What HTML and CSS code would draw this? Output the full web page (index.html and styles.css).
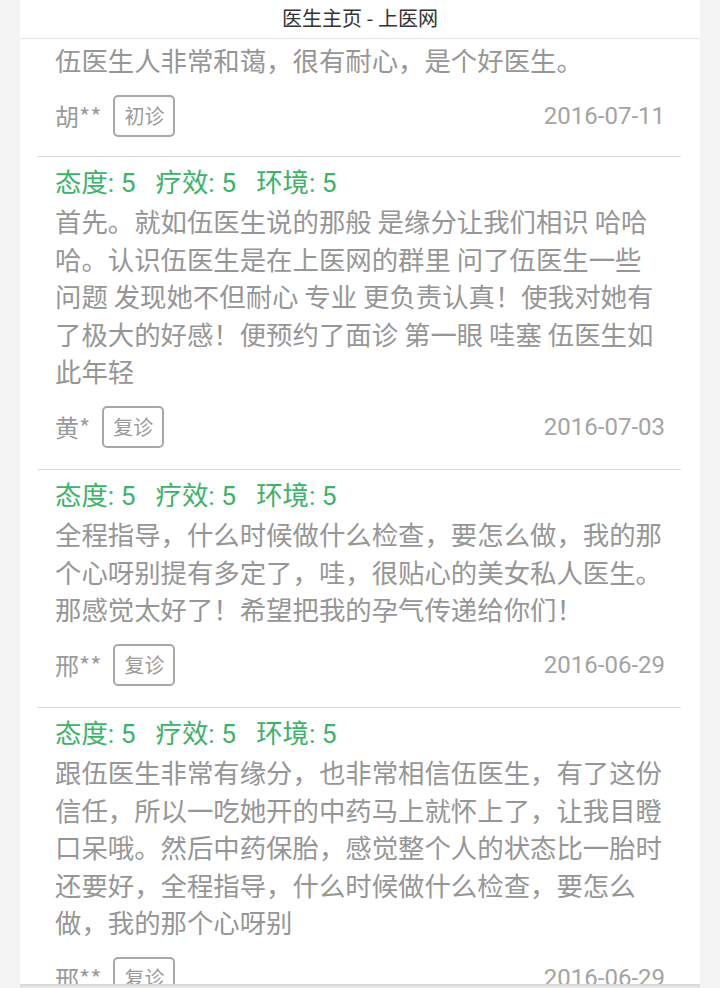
FILE: index.html
```html
<!DOCTYPE html>
<html lang="zh-CN">
<head>
  <meta charset="UTF-8" />
  <title>医生主页 - 上医网</title>
  <meta name="viewport" content="width=device-width, initial-scale=1.0" />
  <link rel="stylesheet" href="styles.css">
</head>
<body>
  <div class="page">
    <div class="topbar">医生主页 - 上医网</div>

    <div class="list">
      <div class="review first">
        <p class="content">伍医生人非常和蔼，很有耐心，是个好医生。</p>
        <div class="meta">
          <div class="who"><span class="name">胡**</span><span class="tag">初诊</span></div>
          <span class="date">2016-07-11</span>
        </div>
      </div>

      <div class="review">
        <div class="scores"><span>态度: 5</span><span>疗效: 5</span><span>环境: 5</span></div>
        <p class="content">首先。就如伍医生说的那般 是缘分让我们相识 哈哈哈。认识伍医生是在上医网的群里 问了伍医生一些问题 发现她不但耐心 专业 更负责认真！使我对她有了极大的好感！便预约了面诊 第一眼 哇塞 伍医生如此年轻</p>
        <div class="meta">
          <div class="who"><span class="name">黄*</span><span class="tag">复诊</span></div>
          <span class="date">2016-07-03</span>
        </div>
      </div>

      <div class="review">
        <div class="scores"><span>态度: 5</span><span>疗效: 5</span><span>环境: 5</span></div>
        <p class="content">全程指导，什么时候做什么检查，要怎么做，我的那个心呀别提有多定了，哇，很贴心的美女私人医生。那感觉太好了！希望把我的孕气传递给你们！</p>
        <div class="meta">
          <div class="who"><span class="name">邢**</span><span class="tag">复诊</span></div>
          <span class="date">2016-06-29</span>
        </div>
      </div>

      <div class="review">
        <div class="scores"><span>态度: 5</span><span>疗效: 5</span><span>环境: 5</span></div>
        <p class="content">跟伍医生非常有缘分，也非常相信伍医生，有了这份信任，所以一吃她开的中药马上就怀上了，让我目瞪口呆哦。然后中药保胎，感觉整个人的状态比一胎时还要好，全程指导，什么时候做什么检查，要怎么做，我的那个心呀别</p>
        <div class="meta">
          <div class="who"><span class="name">邢**</span><span class="tag">复诊</span></div>
          <span class="date">2016-06-29</span>
        </div>
      </div>
    </div>
  </div>

  <div class="bottom-shadow"></div>
</body>
</html>
```

FILE: styles.css
```css
body {
  margin: 0;
  background: #f4f4f4;
  font-family: "Noto Sans CJK SC", sans-serif;
  color: #969696;
}
.page {
  width: 680px;
  margin: 0 20px;
  background: #fff;
  min-height: 100vh;
}
.topbar {
  height: 38px;
  line-height: 35px;
  text-align: center;
  font-size: 20px;
  color: #333;
  border-bottom: 1px solid #e6e6e6;
}
.list {
  padding: 0 19px 0 18px;
}
.review {
  padding: 8px 16px 21px 17px;
  border-bottom: 1px solid #dcdcdc;
}
.review.first {
  padding-top: 2px;
  padding-bottom: 19px;
}
.scores {
  font-family: Roboto, "Noto Sans CJK SC", sans-serif;
  font-size: 26.4px;
  line-height: 37.5px;
  color: #3bb368;
}
.scores span {
  margin-right: 20px;
}
.content {
  margin: 0;
  font-size: 26.4px;
  line-height: 37.5px;
  color: #969696;
}
.meta {
  display: flex;
  align-items: center;
  justify-content: space-between;
  margin-top: 16px;
  height: 42px;
}
.who {
  display: flex;
  align-items: center;
}
.name {
  font-size: 24px;
  color: #9a9a9a;
  margin-right: 12px;
}
.tag {
  display: inline-block;
  box-sizing: border-box;
  height: 42px;
  line-height: 38px;
  padding: 0 9px;
  font-size: 20px;
  color: #9a9a9a;
  border: 2px solid #a8a8a8;
  border-radius: 5px;
}
.date {
  font-family: Roboto, sans-serif;
  font-size: 24px;
  color: #a4a4a4;
}
.bottom-shadow {
  position: fixed;
  left: 20px;
  bottom: 0;
  width: 680px;
  height: 4px;
  background: linear-gradient(#d4d4d4, #ececec);
}
```
